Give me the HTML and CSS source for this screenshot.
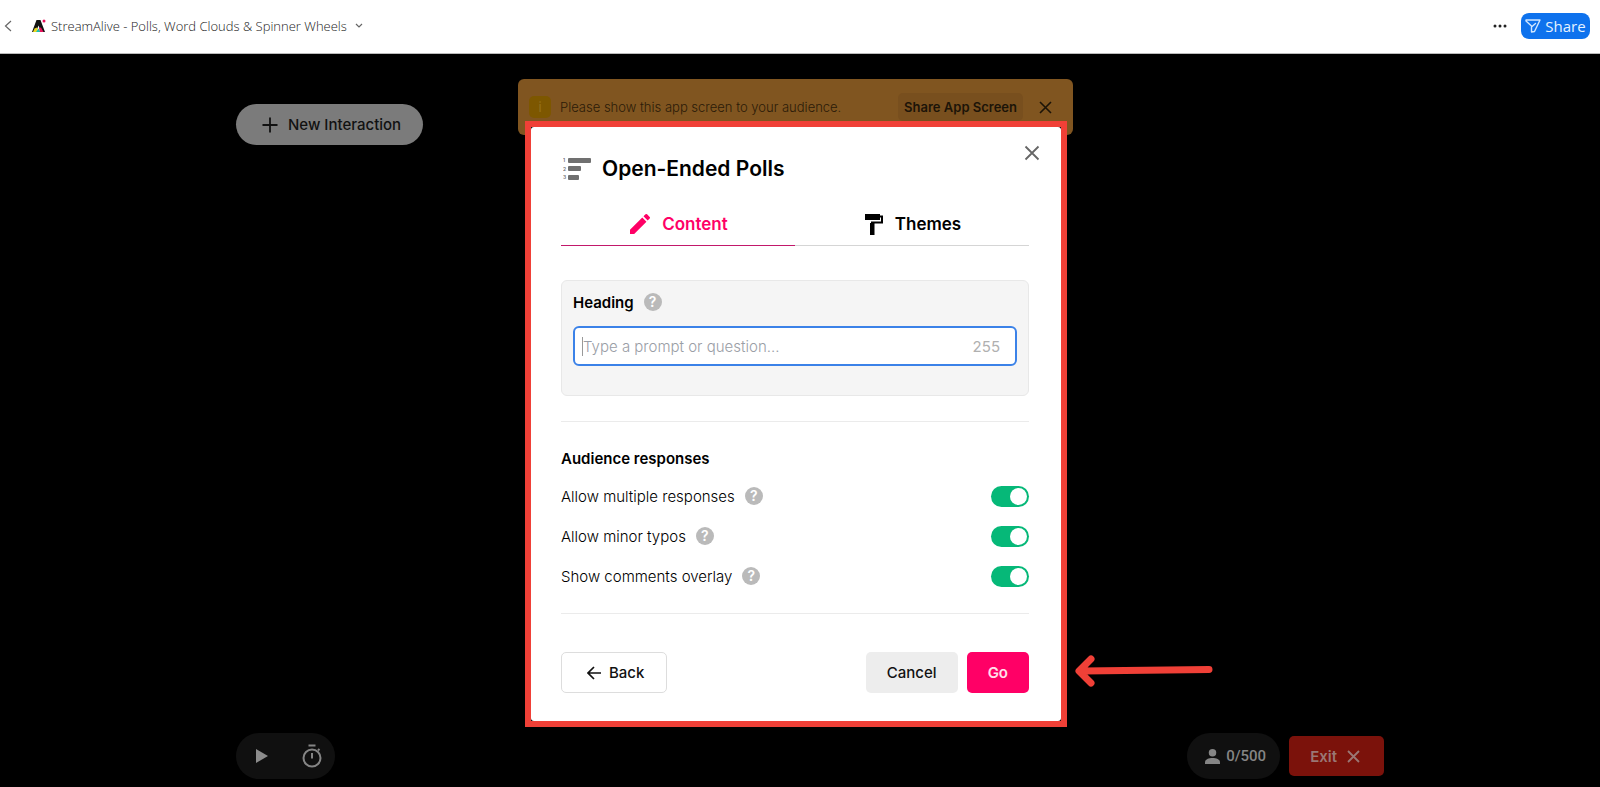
FILE: index.html
```html
<!DOCTYPE html>
<html lang="en">
<head>
    <meta charset="utf-8">
    <title>StreamAlive - Open-Ended Polls</title>
    <link rel="stylesheet" href="styles.css">
</head>
<body>
    <header class="topbar">
        <button class="icon-btn back-btn" aria-label="Go back">
            <svg width="8" height="12" viewBox="0 0 8 12"><path d="M7 1 1.500 6 7 11" fill="none" stroke="#666" stroke-width="1.200"/></svg>
        </button>
        <svg class="logo" width="14" height="14" viewBox="0 0 14 14">
            <path d="M4.500 1h4L13 13H9L6.500 6.500 4 13H0z" fill="#111"/>
            <path d="M2.500 9.500 5 8.500l1.500 4.500H1z" fill="#e9d820"/>
            <path d="M4 13 6.500 9.500 8.500 13z" fill="#19c3b2"/>
            <path d="M7 9 9 8.500 11.500 13H8z" fill="#e8125c"/>
            <circle cx="12" cy="2" r="1.500" fill="#e8125c"/>
        </svg>
        <button class="app-title">
            StreamAlive - Polls, Word Clouds &amp; Spinner Wheels
            <svg width="8" height="6" viewBox="0 0 8 6"><path d="m1 1 3 3 3-3" fill="none" stroke="#666" stroke-width="1.200"/></svg>
        </button>
        <button class="icon-btn more-btn" aria-label="More">
            <svg width="14" height="4" viewBox="0 0 14 4" fill="#222"><circle cx="2" cy="2" r="1.500"/><circle cx="7" cy="2" r="1.500"/><circle cx="12" cy="2" r="1.500"/></svg>
        </button>
        <button class="share-btn">
            <svg width="16" height="14" viewBox="0 0 16 14" fill="none" stroke="#cfe6ff" stroke-width="1.400" stroke-linejoin="round" stroke-linecap="round"><path d="M1 1h14L9.500 12.500 6.500 13V7L1 2zM6.500 8l4-3.500"/></svg>
            Share
        </button>
    </header>

    <main class="stage">
        <div class="stage-top">
            <button class="new-btn">
                <svg width="16" height="16" viewBox="0 0 16 16"><path d="M8 0.500v15M0.500 8h15" stroke="#111" stroke-width="1.800"/></svg>
                New Interaction
            </button>
        </div>

        <!-- Bottom controls -->
        <div class="stage-bottom">
            <div class="pill media">
                <button class="icon-btn" aria-label="Play">
                    <svg width="12" height="14" viewBox="0 0 12 14"><path d="M0 0v14l12-7z" fill="#8c8c8c"/></svg>
                </button>
                <button class="icon-btn" aria-label="Timer">
                    <svg width="20" height="24" viewBox="0 0 20 24" fill="none" stroke="#858585" stroke-width="2"><circle cx="10" cy="14" r="8.500"/><path d="M6.500 1.500h7M10 9v5.500M16 6.500 17.500 5"/></svg>
                </button>
            </div>
            <div class="bottom-right">
                <div class="pill viewers">
                    <svg width="15" height="15" viewBox="0 0 16 16" fill="#858585"><circle cx="8" cy="4" r="4"/><path d="M0 16v-2c0-3 4-4.500 8-4.500s8 1.500 8 4.500v2z"/></svg>
                    0/500
                </div>
                <button class="exit-btn">
                    Exit
                    <svg width="13" height="13" viewBox="0 0 13 13"><path d="m1 1 11 11M12 1 1 12" stroke="#9a7775" stroke-width="1.800"/></svg>
                </button>
            </div>
        </div>

        <!-- Notice behind the dialog -->
        <div class="layer notice-layer">
            <div class="notice">
                <span class="notice-icon">i</span>
                <p>Please show this app screen to your audience.</p>
                <button class="share-screen">Share App Screen</button>
                <button class="icon-btn" aria-label="Dismiss">
                    <svg width="13" height="13" viewBox="0 0 13 13"><path d="m1 1 11 11M12 1 1 12" stroke="#1c1408" stroke-width="1.600"/></svg>
                </button>
            </div>
        </div>

        <div class="layer dialog-layer">
            <div class="frame">
                <form class="dialog" role="dialog" aria-labelledby="dialog-title">
                    <button type="button" class="icon-btn close-btn" aria-label="Close">
                        <svg width="16" height="16" viewBox="0 0 16 16"><path d="m1.500 1.500 13 13M14.500 1.500l-13 13" stroke="#666" stroke-width="1.800"/></svg>
                    </button>
                    <div class="dialog-title">
                        <svg width="28" height="24" viewBox="0 0 28 24" fill="#707070">
                            <rect x="5" y="1" width="23" height="5" rx="1"/>
                            <rect x="5" y="9" width="13" height="5" rx="1"/>
                            <rect x="5" y="18" width="11" height="5" rx="1"/>
                            <g font-family="Inter" font-size="5" font-weight="600"><text x="0" y="5">1</text><text x="0" y="14">2</text><text x="0" y="22">3</text></g>
                        </svg>
                        <h1 id="dialog-title">Open-Ended Polls</h1>
                    </div>

                    <div class="tabs">
                        <button type="button" class="tab active">
                            <svg width="20" height="20" viewBox="3 3 18 18" fill="#ff0066"><path d="M3 17.250V21h3.750L17.810 9.940l-3.750-3.750zM20.710 7.040a1 1 0 0 0 0-1.410l-2.340-2.340a1 1 0 0 0-1.410 0l-1.830 1.830 3.750 3.750z"/></svg>
                            Content
                        </button>
                        <button type="button" class="tab">
                            <svg width="18" height="21" viewBox="0 0 18 21"><path d="M0 0h15v6H0z"/><path d="M15 2.500h2v6H7V13" fill="none" stroke="#000" stroke-width="2"/><path d="M5 9h4.500v12H5z"/></svg>
                            Themes
                        </button>
                    </div>

                    <div class="heading-box">
                        <div class="label-row">
                            <label for="heading">Heading</label>
                            <span class="help">?</span>
                        </div>
                        <div class="field">
                            <input type="text" id="heading" maxlength="255" placeholder="Type a prompt or question...">
                            <span class="count">255</span>
                        </div>
                    </div>

                    <fieldset class="responses">
                        <legend>Audience responses</legend>
                        <div class="option">
                            <label for="multiple">Allow multiple responses</label>
                            <span class="help">?</span>
                            <input type="checkbox" class="switch" id="multiple" checked>
                        </div>
                        <div class="option">
                            <label for="typos">Allow minor typos</label>
                            <span class="help">?</span>
                            <input type="checkbox" class="switch" id="typos" checked>
                        </div>
                        <div class="option">
                            <label for="overlay">Show comments overlay</label>
                            <span class="help">?</span>
                            <input type="checkbox" class="switch" id="overlay" checked>
                        </div>
                    </fieldset>

                    <div class="actions">
                        <button type="button" class="btn outline">
                            <svg width="14" height="14" viewBox="0 0 14 14"><path d="M14 7H1.500M7 1 1 7l6 6" fill="none" stroke="#111" stroke-width="1.700"/></svg>
                            Back
                        </button>
                        <button type="button" class="btn cancel">Cancel</button>
                        <button type="submit" class="btn go">Go</button>
                    </div>
                </form>
                <svg class="arrow" width="138" height="32" viewBox="0 0 138 32" fill="none" stroke="#f04037" stroke-width="7" stroke-linecap="round" stroke-linejoin="round"><path d="M134 14.500 8 16M16 4 4 16l12 12"/></svg>
            </div>
        </div>
    </main>
</body>
</html>
```
FILE: styles.css
```css
* {
    box-sizing: border-box;
}
body {
    margin: 0;
    min-height: 100vh;
    display: flex;
    flex-direction: column;
    font-family: Inter, "Liberation Sans", sans-serif;
    font-size: 15px;
    background: #000;
}
button {
    font: inherit;
    border: 0;
    padding: 0;
    cursor: pointer;
    display: flex;
    align-items: center;
    justify-content: center;
}
.icon-btn {
    background: none;
}

/* Top bar */
.topbar {
    display: flex;
    align-items: center;
    height: 54px;
    padding: 0 10px 2px 4px;
    background: #fff;
    border-bottom: 1px solid #bbb;
    font-family: "Open Sans", "Noto Sans", sans-serif;
}
.logo {
    margin: 0 5px 0 20px;
}
.app-title {
    gap: 8px;
    background: none;
    color: #222;
    font-size: 13px;
    font-weight: 300;
}
.more-btn {
    margin-left: auto;
}
.share-btn {
    gap: 4px;
    width: 69px;
    height: 26px;
    margin-left: 14px;
    border-radius: 8px;
    background: #0e72ed;
    color: #e6f2ff;
    font-size: 15px;
}

/* Stage */
.stage {
    position: relative;
    flex: 1;
    display: flex;
    flex-direction: column;
    justify-content: space-between;
    padding: 50px 216px 8px 236px;
}
.stage-top,
.stage-bottom,
.bottom-right {
    display: flex;
    align-items: center;
}
.stage-bottom {
    justify-content: space-between;
}
.bottom-right {
    gap: 9px;
}
.new-btn {
    gap: 10px;
    height: 41px;
    padding: 0 22px 0 26px;
    border-radius: 21px;
    background: #7b7b7b;
    color: #111;
    font-weight: 500;
}
.pill {
    display: flex;
    align-items: center;
    height: 46px;
    border-radius: 23px;
    background: #101010;
}
.media {
    gap: 34px;
    padding: 0 13px 0 20px;
}
.viewers {
    gap: 6px;
    padding: 0 14px 0 18px;
    color: #858585;
    font-family: Roboto, "Liberation Sans", sans-serif;
    font-weight: 500;
}
.exit-btn {
    gap: 10px;
    height: 40px;
    padding: 0 24px 0 21px;
    border-radius: 5px;
    background: #7b120b;
    color: #9a7775;
    font-weight: 600;
}

/* Layers over the stage */
.layer {
    position: absolute;
    inset: 0;
    display: flex;
    justify-content: center;
    align-items: flex-start;
}
.notice-layer {
    padding-top: 25px;
    padding-right: 9px;
}
.dialog-layer {
    padding-top: 67px;
    padding-right: 8px;
}
.notice {
    display: flex;
    align-items: center;
    width: 555px;
    height: 56px;
    padding: 0 21px 0 11px;
    border-radius: 6px;
    background: #805520;
    color: #2b1b08;
    font-size: 13px;
}
.notice p {
    margin: 0 auto 0 9px;
    font-weight: 300;
}
.notice-icon {
    width: 22px;
    height: 22px;
    border-radius: 5px;
    background: #7d5700;
    color: #94701f;
    line-height: 22px;
    text-align: center;
}
.share-screen {
    height: 28px;
    margin-right: 16px;
    padding: 0 6px;
    border-radius: 5px;
    background: #784f1e;
    color: #1c1408;
    font-weight: 600;
}

/* Dialog */
.frame {
    position: relative;
    border: 6px solid #f04037;
    background: #000;
}
.dialog {
    position: relative;
    width: 530px;
    padding: 29px 32px 28px 30px;
    border-radius: 3px;
    background: #fff;
}
.close-btn {
    position: absolute;
    top: 18px;
    right: 21px;
}
.dialog-title {
    display: flex;
    align-items: center;
    gap: 11px;
    height: 26px;
    padding-left: 2px;
}
.dialog-title h1 {
    margin: 0;
    font-size: 21px;
    font-weight: 600;
    line-height: 26px;
}
.tabs {
    display: flex;
    margin-top: 19px;
}
.tab {
    flex: 1;
    gap: 12px;
    height: 45px;
    padding: 2px 0 0 2px;
    border-bottom: 1px solid #d5d5d5;
    background: none;
    font-size: 17px;
    font-weight: 600;
    color: #000;
}
.tab.active {
    color: #ff0066;
    border-bottom-color: #c2186b;
}
.heading-box {
    height: 116px;
    margin-top: 34px;
    padding: 11px;
    border: 1px solid #e8e8e8;
    border-radius: 6px;
    background: #f5f5f5;
}
.label-row,
.option {
    display: flex;
    align-items: center;
    gap: 10px;
}
.label-row {
    height: 20px;
    font-weight: 600;
}
.help {
    width: 18px;
    height: 18px;
    border-radius: 50%;
    background: #bababa;
    color: #fff;
    font-size: 14px;
    font-weight: 600;
    line-height: 18px;
    text-align: center;
}
.field {
    display: flex;
    align-items: center;
    height: 40px;
    margin-top: 14px;
    padding: 0 15px 0 7px;
    border: 2px solid #3b82e8;
    border-radius: 6px;
    background: #fff;
}
.field input {
    flex: 1;
    border: 0;
    border-left: 1px solid #999;
    outline: 0;
    padding: 0;
    font: inherit;
    background: none;
}
.field input::placeholder {
    color: #9a9ea6;
    font-weight: 300;
}
.count {
    color: #b0b0b0;
}
.responses {
    margin: 25px 0 0;
    padding: 25px 0 17px;
    border: 0;
    border-top: 1px solid #ebebeb;
    border-bottom: 1px solid #ebebeb;
}
.responses legend {
    float: left;
    width: 100%;
    height: 24px;
    margin-bottom: 5px;
    padding: 0;
    font-weight: 600;
    line-height: 24px;
}
.option {
    clear: both;
    height: 40px;
    font-weight: 300;
}
.switch {
    appearance: none;
    width: 38px;
    height: 21px;
    margin: 0 0 0 auto;
    padding: 2px;
    border-radius: 11px;
    background: #06b878;
    cursor: pointer;
}
.switch::before {
    content: "";
    display: block;
    width: 17px;
    height: 17px;
    border-radius: 50%;
    background: #fff;
}
.switch:checked::before {
    margin-left: auto;
}
.switch:not(:checked) {
    background: #bababa;
}
.actions {
    display: flex;
    gap: 9px;
    margin-top: 38px;
}
.btn {
    height: 41px;
    padding: 0 21px;
    border-radius: 5px;
    font-weight: 500;
    color: #111;
}
.btn.outline {
    gap: 8px;
    margin-right: auto;
    border: 1px solid #ddd;
    background: #fff;
    padding: 0 22px 0 25px;
}
.btn.cancel {
    background: #ededed;
}
.btn.go {
    background: #ff0066;
    color: #ffe0ec;
    font-weight: 600;
}
.arrow {
    position: absolute;
    left: 544px;
    bottom: 34px;
}
```
